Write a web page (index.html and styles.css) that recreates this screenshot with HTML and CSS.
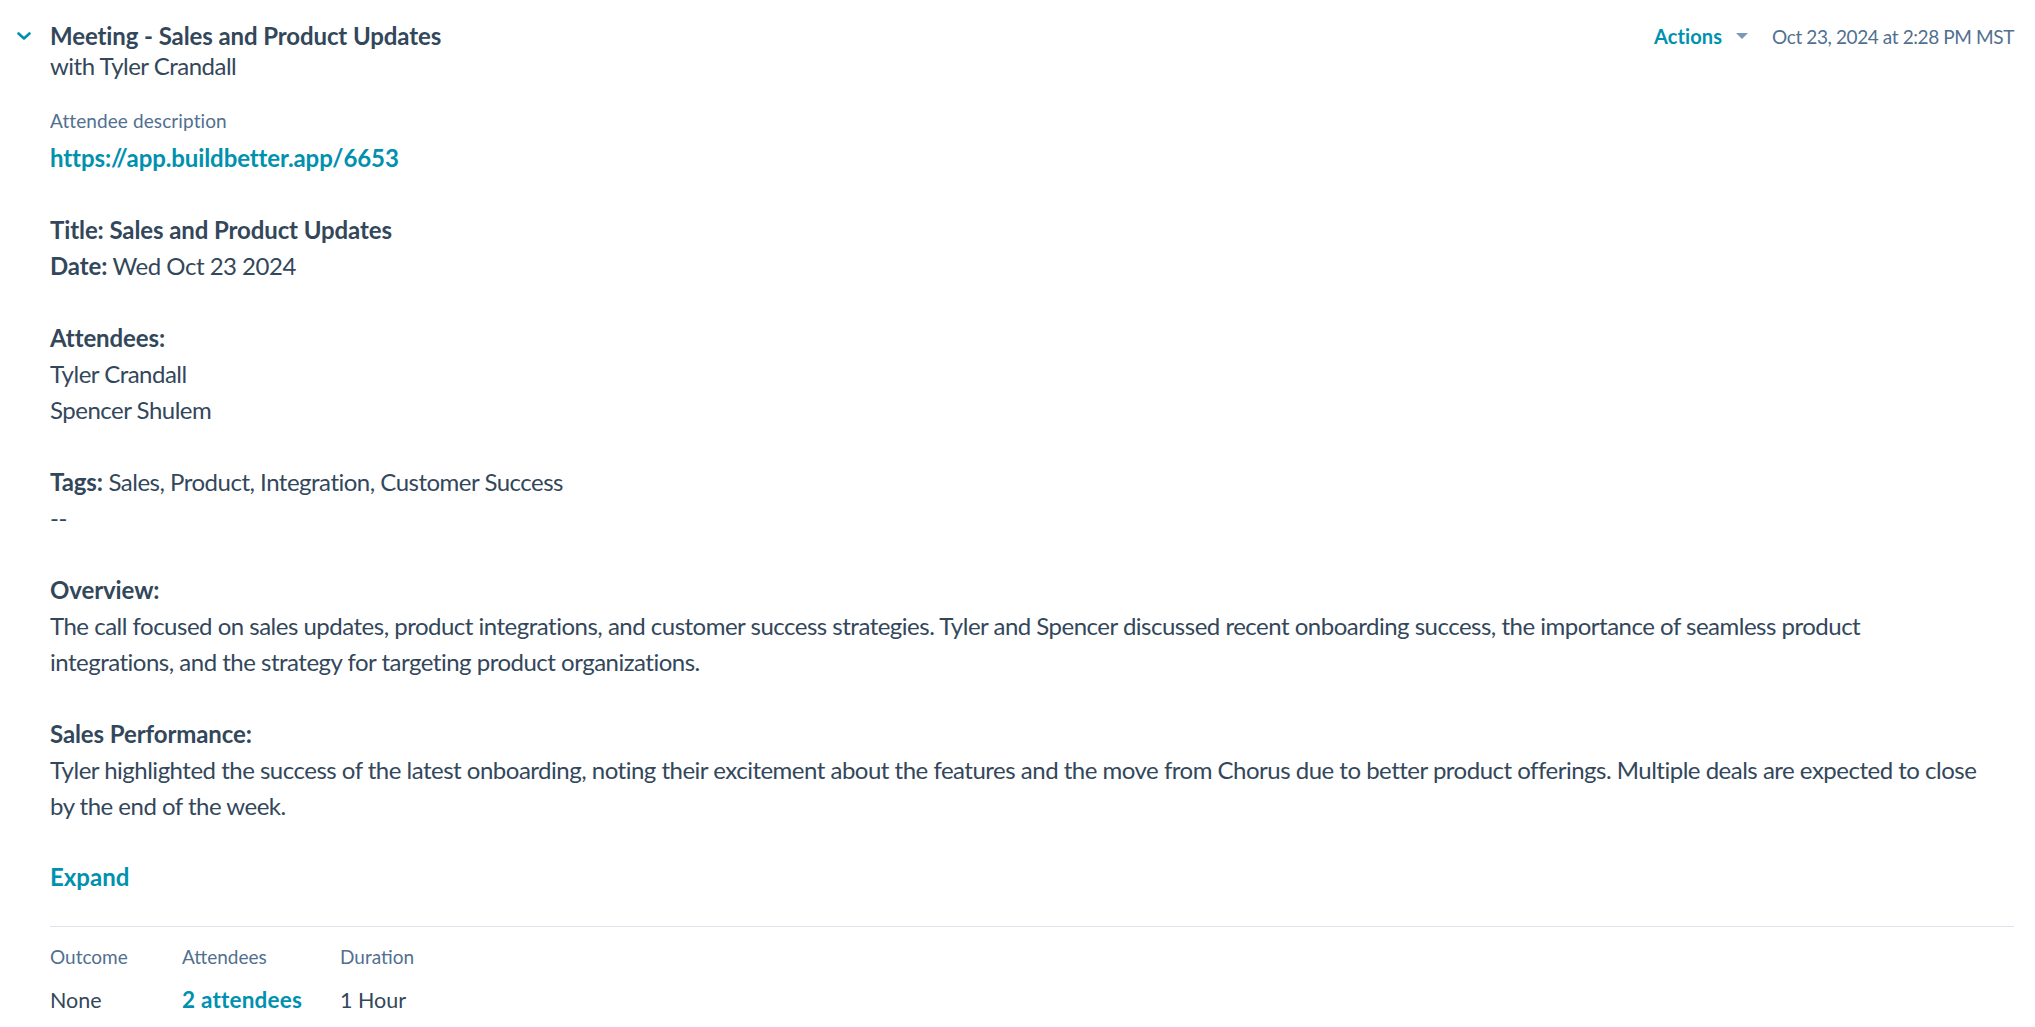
FILE: index.html
```html
<!DOCTYPE html>
<html lang="en">
<head>
<meta charset="utf-8">
<title>Meeting - Sales and Product Updates</title>
<link rel="stylesheet" href="styles.css">
</head>
<body>
<article class="engagement">
  <header class="eng-header">
    <button class="chevron" aria-label="Collapse">
      <svg width="14" height="8" viewBox="0 0 14 8"><path d="M1.5 1.5 L7 6.5 L12.5 1.5" fill="none" stroke="#0091ae" stroke-width="2.6" stroke-linecap="round" stroke-linejoin="round"/></svg>
    </button>
    <div class="eng-titles">
      <div class="eng-title">Meeting - Sales and Product Updates</div>
      <div class="eng-subtitle">with Tyler Crandall</div>
    </div>
    <div class="eng-meta">
      <a class="actions" href="#">Actions<svg class="caret" width="12" height="6" viewBox="0 0 12 6"><path d="M0 0 H12 L6 6 Z" fill="#7c98b6"/></svg></a>
      <span class="timestamp">Oct 23, 2024 at 2:28 PM MST</span>
    </div>
  </header>

  <section class="eng-body">
    <div class="field-label">Attendee description</div>
    <div class="description">
      <p><a class="link strong" href="#">https://app.buildbetter.app/6653</a></p>
      <p><b>Title: Sales and Product Updates</b><br><b>Date:</b> Wed Oct 23 2024</p>
      <p><b>Attendees:</b><br>Tyler Crandall<br>Spencer Shulem</p>
      <p><b>Tags:</b> Sales, Product, Integration, Customer Success<br>--</p>
      <p><b>Overview:</b><br>The call focused on sales updates, product integrations, and customer success strategies. Tyler and Spencer discussed recent onboarding success, the importance of seamless product integrations, and the strategy for targeting product organizations.</p>
      <p><b>Sales Performance:</b><br>Tyler highlighted the success of the latest onboarding, noting their excitement about the features and the move from Chorus due to better product offerings. Multiple deals are expected to close by the end of the week.</p>
    </div>
    <a class="expand" href="#">Expand</a>

    <div class="eng-footer">
      <div class="stat">
        <div class="stat-label">Outcome</div>
        <div class="stat-value">None</div>
      </div>
      <div class="stat">
        <div class="stat-label">Attendees</div>
        <a class="stat-value link strong" href="#">2 attendees</a>
      </div>
      <div class="stat">
        <div class="stat-label">Duration</div>
        <div class="stat-value">1 Hour</div>
      </div>
    </div>
  </section>
</article>
</body>
</html>
```

FILE: styles.css
```css
* { box-sizing: border-box; }

html, body {
  margin: 0;
  padding: 0;
  background: #ffffff;
}

body {
  font-family: "Lato", "Noto Sans", sans-serif;
  color: #33475b;
  -webkit-font-smoothing: antialiased;
}

a { text-decoration: none; }

.engagement {
  padding: 21px 21px 0 0;
}

.eng-header {
  display: flex;
  align-items: flex-start;
}

.chevron {
  width: 50px;
  height: 30px;
  padding: 0 0 0 17px;
  margin: 0;
  border: 0;
  background: transparent;
  display: flex;
  align-items: center;
  justify-content: flex-start;
}

.eng-titles {
  flex: 1;
}

.eng-title {
  font-size: 24px;
  line-height: 30px;
  font-weight: 700;
  letter-spacing: -0.1px;
}

.eng-subtitle {
  font-size: 24px;
  line-height: 30px;
  letter-spacing: -0.5px;
}

.eng-meta {
  display: flex;
  align-items: center;
  height: 30px;
}

.actions {
  color: #0091ae;
  font-weight: 700;
  font-size: 20px;
  letter-spacing: 0.1px;
  display: flex;
  align-items: center;
  gap: 14px;
}

.timestamp {
  margin-left: 24px;
  font-size: 19px;
  letter-spacing: -0.4px;
  color: #516f90;
}

.eng-body {
  padding-left: 50px;
  padding-top: 25px;
}

.field-label {
  font-size: 19px;
  line-height: 30px;
  letter-spacing: 0.1px;
  color: #516f90;
}

.description {
  margin-top: 4px;
  padding-right: 30px;
  font-size: 24px;
  line-height: 36px;
  letter-spacing: -0.5px;
}

.description p {
  margin: 0 0 36px;
}

.description p:last-child {
  margin-bottom: 0;
}

.description b,
.strong {
  font-weight: 700;
  letter-spacing: -0.1px;
}

.link {
  color: #0091ae;
}

.expand {
  display: block;
  width: max-content;
  margin-top: 35px;
  color: #0091ae;
  font-weight: 700;
  font-size: 24px;
  line-height: 36px;
}

.eng-footer {
  margin-top: 31px;
  border-top: 1px solid #dfe3eb;
  padding-top: 16px;
  display: grid;
  grid-template-columns: 132px 158px auto;
}

.stat-label {
  font-size: 19px;
  line-height: 28px;
  color: #516f90;
}

.stat-value {
  display: block;
  margin-top: 11px;
  font-size: 21.5px;
  line-height: 36px;
  color: #33475b;
}

.stat-value.link {
  color: #0091ae;
  font-size: 22.5px;
  letter-spacing: 0.2px;
}
```
